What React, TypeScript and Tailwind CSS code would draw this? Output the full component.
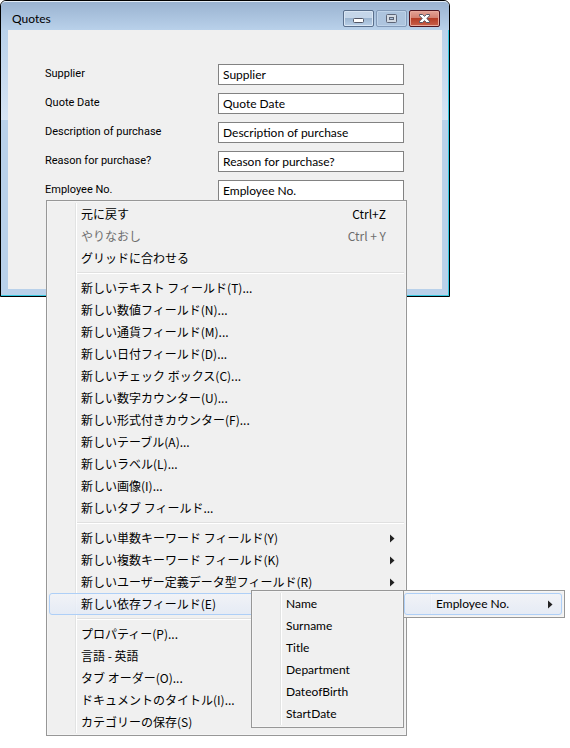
import type { ReactNode } from "react";
import clsx from "clsx";

interface MenuEntry {
  label: string;
  shortcut?: string;
  disabled?: boolean;
  children?: MenuEntry[];
  open?: boolean;
  side?: "left" | "right";
}

const fields = [
  { id: "supplier", label: "Supplier" },
  { id: "quote-date", label: "Quote Date" },
  { id: "description", label: "Description of purchase" },
  { id: "reason", label: "Reason for purchase?" },
  { id: "employee-no", label: "Employee No." },
];

const employeeColumns: MenuEntry[] = [
  { label: "Name" },
  { label: "Surname" },
  { label: "Title" },
  { label: "Department" },
  { label: "DateofBirth" },
  { label: "StartDate" },
];

const menuGroups: MenuEntry[][] = [
  [
    { label: "元に戻す", shortcut: "Ctrl+Z" },
    { label: "やりなおし", shortcut: "Ctrl + Y", disabled: true },
    { label: "グリッドに合わせる" },
  ],
  [
    { label: "新しいテキスト フィールド(T)..." },
    { label: "新しい数値フィールド(N)..." },
    { label: "新しい通貨フィールド(M)..." },
    { label: "新しい日付フィールド(D)..." },
    { label: "新しいチェック ボックス(C)..." },
    { label: "新しい数字カウンター(U)..." },
    { label: "新しい形式付きカウンター(F)..." },
    { label: "新しいテーブル(A)..." },
    { label: "新しいラベル(L)..." },
    { label: "新しい画像(I)..." },
    { label: "新しいタブ フィールド..." },
  ],
  [
    { label: "新しい単数キーワード フィールド(Y)", children: [] },
    { label: "新しい複数キーワード フィールド(K)", children: [] },
    { label: "新しいユーザー定義データ型フィールド(R)", children: [] },
    {
      label: "新しい依存フィールド(E)",
      open: true,
      side: "right",
      children: [
        {
          label: "Employee No.",
          open: true,
          side: "left",
          children: employeeColumns,
        },
      ],
    },
  ],
  [
    { label: "プロパティー(P)..." },
    { label: "言語 - 英語" },
    { label: "タブ オーダー(O)..." },
    { label: "ドキュメントのタイトル(I)..." },
    { label: "カテゴリーの保存(S)" },
  ],
];

function Arrow() {
  return (
    <svg width="5" height="9" viewBox="0 0 5 9" className="shrink-0">
      <path d="M0 0.5L4.5 4.5L0 8.5Z" fill="#222" />
    </svg>
  );
}

function MenuItem({ entry }: { entry: MenuEntry }) {
  return (
    <li className="relative">
      <button
        disabled={entry.disabled}
        className={clsx(
          "flex h-[22px] w-full items-center justify-between rounded-[3px] border pr-2 pl-[31px] text-left whitespace-nowrap",
          entry.open
            ? "border-[#aecff7] bg-linear-to-b from-[#f1f3f8]/80 to-[#e3eaf6]/80"
            : "border-transparent",
          entry.disabled ? "text-[#6d6d6d]" : "text-black",
        )}
      >
        <span>{entry.label}</span>
        {entry.shortcut && <span className="mr-[9px]">{entry.shortcut}</span>}
        {entry.children && <Arrow />}
      </button>
      {entry.open && entry.children && (
        <div
          className={clsx(
            "absolute -top-[3px] font-['Lato','Noto_Sans_CJK_JP',sans-serif]",
            entry.side === "left"
              ? "right-full w-[153px]"
              : "left-full -ml-[3px] w-[164px]",
          )}
        >
          <Menu groups={[entry.children]} />
        </div>
      )}
    </li>
  );
}

function Menu({ groups }: { groups: MenuEntry[][] }) {
  return (
    <div className="border border-[#979797] bg-[#f0f0f0] p-[2px] shadow-[inset_0_0_0_1px_#f5f5f5]">
      <div className="bg-[linear-gradient(90deg,transparent_26px,#e2e3e3_26px,#e2e3e3_27px,#fff_27px,#fff_28px,transparent_28px)]">
        {groups.map((group, i) => (
          <ul key={i}>
            {i > 0 && (
              <li className="flex h-2 items-center pl-7">
                <hr className="h-[2px] w-full border-t border-b border-t-[#e0e0e0] border-b-white" />
              </li>
            )}
            {group.map((entry) => (
              <MenuItem key={entry.label} entry={entry} />
            ))}
          </ul>
        ))}
      </div>
    </div>
  );
}

interface CaptionButtonProps {
  title: string;
  className: string;
  children: ReactNode;
}

function CaptionButton({ title, className, children }: CaptionButtonProps) {
  return (
    <button
      aria-label={title}
      className={clsx(
        "flex h-[17px] w-[31px] items-center justify-center rounded-[2px] border",
        className,
      )}
    >
      {children}
    </button>
  );
}

function TitleBar() {
  return (
    <header className="flex h-[29px] items-start justify-between rounded-t-[5px] border-t border-white/60 bg-linear-to-b from-[#9ab3d1] to-[#b9d1ea] pr-[9px] pl-[11px]">
      <h1 className="mt-2 font-['Lato',sans-serif] text-xs leading-[18px]">
        Quotes
      </h1>
      <div className="mt-2 flex gap-[2px]">
        <CaptionButton
          title="Minimize"
          className="border-[#5a6f8c] bg-[linear-gradient(#c5d6e9_50%,#9db6d1_50%,#b9d0e8)] shadow-[inset_0_0_0_1px_#d9e6f4]"
        >
          <svg width="11" height="5" viewBox="0 0 11 5" className="mt-1">
            <rect x="0.5" y="0.5" width="10" height="4" rx="1" fill="#fff" stroke="#535666" />
          </svg>
        </CaptionButton>
        <CaptionButton
          title="Maximize"
          className="border-[#8299b7] bg-[#adc4de] shadow-[inset_0_0_0_1px_#bfd3e9]"
        >
          <svg width="11" height="9" viewBox="0 0 11 9">
            <rect x="0.5" y="0.5" width="10" height="8" rx="1" fill="#d3dae3" stroke="#5d6577" />
            <rect x="3.5" y="3.5" width="4" height="2" fill="#adc4de" stroke="#5d6577" />
          </svg>
        </CaptionButton>
        <CaptionButton
          title="Close"
          className="border-[#4e1520] bg-[linear-gradient(#e3a397,#d27d6d_50%,#b53d26_50%,#c9604a)] shadow-[inset_0_0_0_1px_#e8a99c]"
        >
          <svg width="11" height="9" viewBox="0 0 11 9">
            <path
              d="M0.5 0.5H3.5L5.5 2.3L7.5 0.5H10.5V1.8L7.8 4.5L10.5 7.2V8.5H7.5L5.5 6.7L3.5 8.5H0.5V7.2L3.2 4.5L0.5 1.8Z"
              fill="#fff"
              stroke="#535666"
            />
          </svg>
        </CaptionButton>
      </div>
    </header>
  );
}

export default function App() {
  return (
    <main className="relative min-h-screen bg-white text-black">
      <section className="mr-[120px] rounded-t-[6px] border border-black bg-[#b9d1ea]">
        <TitleBar />
        <div className="border-r border-b border-[#35c8e0] bg-[linear-gradient(#b9d1ea,#d6e4f4_90px,#b9d1ea_90px)] pr-[6px] pb-[6px] pl-[7px]">
          <form className="grid grid-cols-[173px_1fr] gap-y-2 bg-[#f0f0f0] pt-[34px] pr-[38px] pb-[88px] pl-[37px]">
            {fields.map((field) => (
              <div key={field.id} className="contents">
                <label
                  htmlFor={field.id}
                  className="font-['Roboto',sans-serif] text-[11px] leading-5"
                >
                  {field.label}
                </label>
                <input
                  id={field.id}
                  defaultValue={field.label}
                  className="h-[21px] w-full border border-[#828282] bg-white px-1 font-['Lato',sans-serif] text-xs"
                />
              </div>
            ))}
          </form>
        </div>
      </section>
      <nav className="absolute top-[200px] left-[46px] w-[361px] font-['Noto_Sans_CJK_JP',sans-serif] text-xs">
        <Menu groups={menuGroups} />
      </nav>
    </main>
  );
}
